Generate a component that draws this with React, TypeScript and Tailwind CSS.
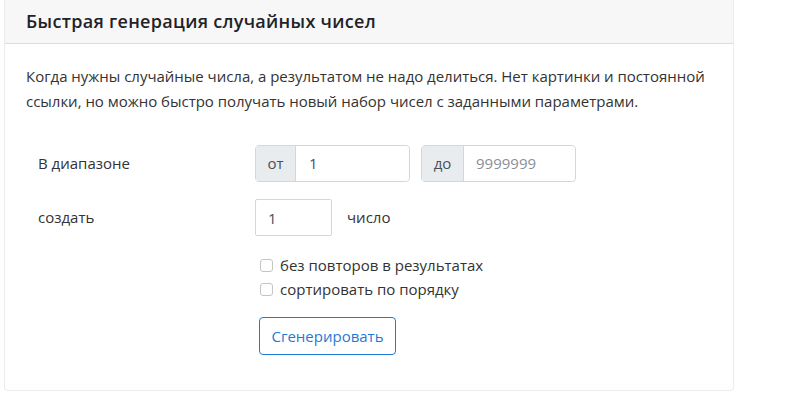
import React from 'react';

export default function App() {
  return (
    <div className="h-[406px] w-[800px] bg-white font-['Open_Sans',sans-serif] text-[#212529]">
      <div className="ml-[4px] w-[730px] rounded-b-[4px] border-x border-b border-[#ececec]">
        <div className="flex h-[44px] items-center border-b border-[#dcdcdc] bg-[#f7f7f7] pl-[21px] pb-[1px]">
          <h1 className="text-[18px] font-semibold tracking-[0.3px] text-[#1f2328]">
            Быстрая генерация случайных чисел
          </h1>
        </div>
        <div className="px-[21px] pt-[20px] pb-[35px]">
          <p className="text-[15px] leading-[25px] tracking-[-0.02px] text-[#333]">
            Когда нужны случайные числа, а результатом не надо делиться. Нет картинки и постоянной
            ссылки, но можно быстро получать новый набор чисел с заданными параметрами.
          </p>

          <div className="mt-[31px] flex items-center">
            <label className="w-[229px] pl-[12px] text-[15px] text-[#333]">В диапазоне</label>
            <div className="flex h-[37px] w-[155px] rounded-[4px] border border-[#d3d7db]">
              <span className="flex w-[40px] items-center justify-center border-r border-[#d3d7db] bg-[#e9ecef] text-[15px] text-[#495057]">
                от
              </span>
              <input
                defaultValue="1"
                className="min-w-0 flex-1 rounded-r-[4px] bg-white pl-[13px] text-[15px] text-[#495057] outline-none"
              />
            </div>
            <div className="ml-[11px] flex h-[37px] w-[155px] rounded-[4px] border border-[#d3d7db]">
              <span className="flex w-[42px] items-center justify-center border-r border-[#d3d7db] bg-[#e9ecef] text-[15px] text-[#495057]">
                до
              </span>
              <input
                placeholder="9999999"
                className="min-w-0 flex-1 rounded-r-[4px] bg-white pl-[12px] text-[15px] text-[#495057] outline-none placeholder:text-[#8a8f95]"
              />
            </div>
          </div>

          <div className="mt-[17px] flex items-center">
            <label className="w-[229px] pl-[12px] text-[15px] text-[#333]">создать</label>
            <input
              defaultValue="1"
              className="h-[37px] w-[77px] rounded-[2px] border border-[#d3d7db] pl-[12px] text-[15px] text-[#495057] outline-none"
            />
            <span className="ml-[15px] text-[15px] text-[#333]">число</span>
          </div>

          <div className="mt-[18px] ml-[234px] flex flex-col gap-[1px]">
            <label className="flex items-center gap-[7px] text-[15px] leading-[23px] text-[#333]">
              <span className="h-[13px] w-[13px] rounded-[3px] border border-[#c4c4c4] bg-white" />
              без повторов в результатах
            </label>
            <label className="flex items-center gap-[7px] text-[15px] leading-[23px] text-[#333]">
              <span className="h-[13px] w-[13px] rounded-[3px] border border-[#c4c4c4] bg-white" />
              сортировать по порядку
            </label>
          </div>

          <button className="mt-[16px] ml-[233px] h-[38px] w-[137px] rounded-[4px] border border-[#1f7ad6] text-[15px] text-[#1f7ad6]">
            Сгенерировать
          </button>
        </div>
      </div>
    </div>
  );
}
